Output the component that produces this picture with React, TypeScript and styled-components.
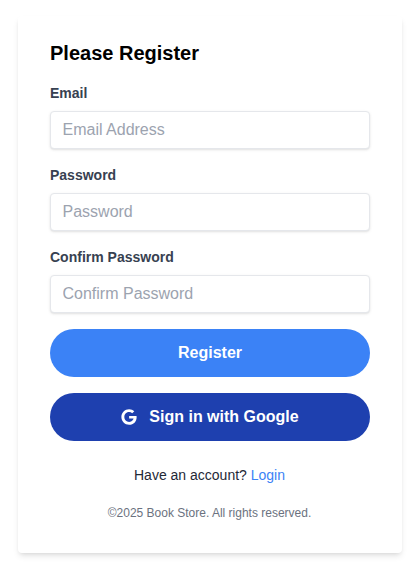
import React from "react";
import styled, { createGlobalStyle } from "styled-components";
import { FaGoogle } from "react-icons/fa";

const Global = createGlobalStyle`
  * { box-sizing: border-box; }
  html, body { margin: 0; padding: 0; background: #fff; }
  body { font-family: "Liberation Sans", Arial, sans-serif; color: #000; }
`;

const Page = styled.main`
  padding: 16px 15px 14px 18px;
`;

const Card = styled.section`
  background: #fff;
  border-radius: 4px;
  padding: 23px 32px 24px;
  box-shadow: 0 4px 6px -1px rgba(0, 0, 0, 0.1), 0 2px 4px -2px rgba(0, 0, 0, 0.1);
`;

const Title = styled.h1`
  margin: 0 0 16px;
  font-size: 20px;
  line-height: 28px;
  font-weight: 700;
`;

const Field = styled.div`
  margin-bottom: 16px;
`;

const Label = styled.label`
  display: block;
  margin-bottom: 8px;
  font-size: 14px;
  line-height: 20px;
  font-weight: 700;
  color: #374151;
`;

const Input = styled.input`
  display: block;
  width: 100%;
  height: 38px;
  padding: 0 11.5px;
  border: 1px solid #e5e7eb;
  border-radius: 4px;
  background: #fff;
  font: 16px/24px "Liberation Sans", Arial, sans-serif;
  color: #374151;
  box-shadow: 0 1px 3px 0 rgba(0, 0, 0, 0.1), 0 1px 2px -1px rgba(0, 0, 0, 0.1);
  &::placeholder { color: #9ca3af; opacity: 1; }
`;

const PillButton = styled.button<{ $bg: string }>`
  display: flex;
  align-items: center;
  justify-content: center;
  gap: 12px;
  width: 100%;
  height: 48px;
  margin-bottom: 16px;
  border: 0;
  border-radius: 9999px;
  background: ${(p) => p.$bg};
  color: #fff;
  font: 700 16px/24px "Liberation Sans", Arial, sans-serif;
`;

const Prompt = styled.p`
  margin: 24px 0 0;
  padding-right: 1px;
  text-align: center;
  font-size: 14px;
  line-height: 20px;
  color: #1f2937;
`;

const LoginLink = styled.a`
  color: #3b82f6;
  text-decoration: none;
`;

const Copy = styled.p`
  margin: 20px 0 0;
  padding: 0 1px 8px 0;
  text-align: center;
  font-size: 12px;
  line-height: 16px;
  color: #6b7280;
`;

const fields = [
  { id: "email", label: "Email", type: "email", ph: "Email Address" },
  { id: "password", label: "Password", type: "password", ph: "Password" },
  { id: "confirm", label: "Confirm Password", type: "password", ph: "Confirm Password" },
];

export default function App() {
  return (
    <Page>
      <Global />
      <Card>
        <Title>Please Register</Title>
        <form onSubmit={(e) => e.preventDefault()}>
          {fields.map((f) => (
            <Field key={f.id}>
              <Label htmlFor={f.id}>{f.label}</Label>
              <Input id={f.id} type={f.type} placeholder={f.ph} />
            </Field>
          ))}
          <PillButton $bg="#3b82f6" type="submit">Register</PillButton>
          <PillButton $bg="#1e40af" type="button">
            <FaGoogle size={16} />
            Sign in with Google
          </PillButton>
        </form>
        <Prompt>
          Have an account? <LoginLink href="#">Login</LoginLink>
        </Prompt>
        <Copy>©2025 Book Store. All rights reserved.</Copy>
      </Card>
    </Page>
  );
}
